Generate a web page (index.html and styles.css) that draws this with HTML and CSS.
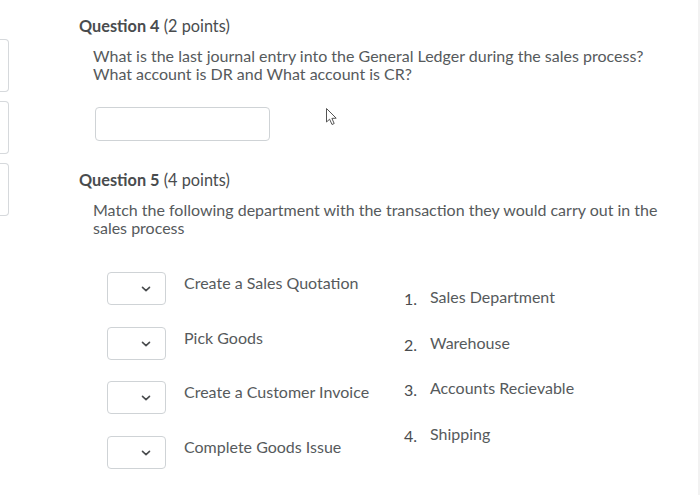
FILE: index.html
```html
<!DOCTYPE html>
<html>
<head>
<meta charset="utf-8">
<link rel="stylesheet" href="styles.css">
</head>
<body>
<div class="page">
  <aside class="side">
    <div class="side-card c1"></div>
    <div class="side-card c2"></div>
    <div class="side-card c3"></div>
  </aside>
  <main class="main">
    <section class="q q4">
      <h2 class="q-title"><b>Question 4</b> (2 points)</h2>
      <p class="q-text">What is the last journal entry into the General Ledger during the sales process?<br>What account is DR and What account is CR?</p>
      <div class="answer-row">
        <div class="text-input"></div>
        <svg class="cursor" width="16" height="20" viewBox="0 0 16 20"><path d="M1.5 1.5 L1.5 15 L4.6 12.2 L7 17.5 L9.2 16.5 L6.9 11.4 L11.2 11.2 Z" fill="#fff" stroke="#555" stroke-width="1" stroke-linejoin="round"/></svg>
      </div>
    </section>
    <section class="q q5">
      <h2 class="q-title"><b>Question 5</b> (4 points)</h2>
      <p class="q-text">Match the following department with the transaction they would carry out in the sales process</p>
      <div class="match">
        <div class="match-left">
          <div class="m-row"><div class="sel"><svg width="10" height="6" viewBox="0 0 10 6"><path d="M1.5 1.3 L5 4.6 L8.5 1.3" fill="none" stroke="#494c4e" stroke-width="1.6" stroke-linecap="round" stroke-linejoin="round"/></svg></div><span class="m-label">Create a Sales Quotation</span></div>
          <div class="m-row"><div class="sel"><svg width="10" height="6" viewBox="0 0 10 6"><path d="M1.5 1.3 L5 4.6 L8.5 1.3" fill="none" stroke="#494c4e" stroke-width="1.6" stroke-linecap="round" stroke-linejoin="round"/></svg></div><span class="m-label">Pick Goods</span></div>
          <div class="m-row"><div class="sel"><svg width="10" height="6" viewBox="0 0 10 6"><path d="M1.5 1.3 L5 4.6 L8.5 1.3" fill="none" stroke="#494c4e" stroke-width="1.6" stroke-linecap="round" stroke-linejoin="round"/></svg></div><span class="m-label">Create a Customer Invoice</span></div>
          <div class="m-row"><div class="sel"><svg width="10" height="6" viewBox="0 0 10 6"><path d="M1.5 1.3 L5 4.6 L8.5 1.3" fill="none" stroke="#494c4e" stroke-width="1.6" stroke-linecap="round" stroke-linejoin="round"/></svg></div><span class="m-label">Complete Goods Issue</span></div>
        </div>
        <ol class="match-right">
          <li><span class="num">1.</span><span>Sales Department</span></li>
          <li><span class="num">2.</span><span>Warehouse</span></li>
          <li><span class="num">3.</span><span>Accounts Recievable</span></li>
          <li><span class="num">4.</span><span>Shipping</span></li>
        </ol>
      </div>
    </section>
  </main>
</div>
</body>
</html>
```

FILE: styles.css
```css
html, body {
  margin: 0;
  padding: 0;
  background: #fff;
}
body {
  font-family: Lato, "Open Sans", sans-serif;
  color: #565a5c;
  width: 700px;
  height: 495px;
  overflow: hidden;
}
.page {
  display: flex;
  height: 495px;
  box-sizing: border-box;
  border-right: 2px solid #f2f2f2;
}
.side {
  width: 9px;
  padding-top: 39px;
  display: flex;
  flex-direction: column;
  gap: 9px;
}
.side-card {
  width: 9px;
  height: 53px;
  box-sizing: border-box;
  border: 1px solid #d6d9dc;
  border-left: none;
  border-radius: 0 4px 4px 0;
}
.main {
  padding-left: 70px;
  flex: 1;
}
.q-title {
  margin: 0;
  font-size: 16.3px;
  line-height: 20px;
  font-weight: normal;
  color: #494c4e;
}
.q-title b {
  font-weight: bold;
}
.q4 .q-title {
  padding-top: 16px;
}
.q-text {
  margin: 0;
  padding-left: 14px;
  font-size: 16px;
  line-height: 18px;
  color: #565a5c;
}
.q4 .q-text {
  margin-top: 11px;
}
.answer-row {
  display: flex;
  align-items: flex-start;
  margin-top: 24px;
  padding-left: 16px;
}
.text-input {
  width: 175px;
  height: 34px;
  box-sizing: border-box;
  border: 1px solid #cfd3d6;
  border-radius: 4px;
}
.cursor {
  margin-left: 55px;
  margin-top: 0px;
}
.q5 .q-title {
  margin-top: 29px;
}
.q5 .q-text {
  margin-top: 11px;
  padding-right: 30px;
}
.match {
  display: flex;
  margin-top: 35px;
  padding-left: 28px;
}
.match-left {
  display: flex;
  flex-direction: column;
  width: 297px;
}
.m-row {
  display: flex;
  align-items: flex-start;
  height: 54.5px;
}
.sel {
  width: 59px;
  height: 33px;
  box-sizing: border-box;
  border: 1px solid #cfd3d6;
  border-radius: 4px;
  display: flex;
  align-items: center;
  justify-content: flex-end;
  padding-right: 14px;
  padding-top: 1px;
}
.sel svg {
  display: block;
}
.m-label {
  margin-left: 18px;
  margin-top: 2px;
  font-size: 16px;
  line-height: 18px;
  color: #565a5c;
}
.match-right {
  list-style: none;
  margin: 0;
  padding: 0;
  padding-top: 16px;
  font-size: 16px;
  line-height: 18px;
  color: #565a5c;
}
.match-right li {
  display: flex;
  height: 45.7px;
}
.match-right .num {
  width: 26px;
  color: #494c4e;
  padding-top: 2px;
}
```
